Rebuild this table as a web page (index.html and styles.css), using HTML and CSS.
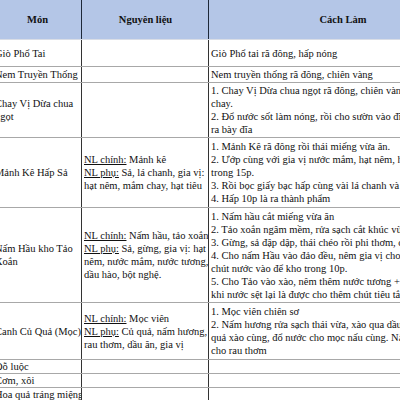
FILE: index.html
```html
<!DOCTYPE html>
<html lang="vi">
<head>
<meta charset="utf-8">
<title>Thực đơn</title>
<link rel="stylesheet" href="styles.css">
</head>
<body>
<div class="sheet">
<table class="menu">
  <colgroup>
    <col class="c1"><col class="c2"><col class="c3">
  </colgroup>
  <thead>
    <tr class="head">
      <th>Món</th>
      <th>Nguyên liệu</th>
      <th>Cách Làm</th>
    </tr>
  </thead>
  <tbody>
    <tr class="r1">
      <td>Giò Phổ Tai</td>
      <td></td>
      <td>Giò Phổ tai rã đông, hấp nóng</td>
    </tr>
    <tr class="r2">
      <td>Nem Truyền Thống</td>
      <td></td>
      <td>Nem truyền thống rã đông, chiên vàng</td>
    </tr>
    <tr class="r3">
      <td>Chay Vị Dừa chua<br>ngọt</td>
      <td></td>
      <td>1. Chay Vị Dừa chua ngọt rã đông, chiên vàng<br>chay.<br>2. Đổ nước sốt làm nóng, rồi cho sườn vào đĩa<br>ra bày đĩa</td>
    </tr>
    <tr class="r4">
      <td>Mảnh Kê Hấp Sả</td>
      <td><span class="u">NL chính:</span> Mảnh kê<br><span class="u">NL phụ:</span> Sả, lá chanh, gia vị:<br>hạt nêm, mắm chay, hạt tiêu</td>
      <td>1. Mảnh Kê rã đông rồi thái miếng vừa ăn.<br>2. Ướp cùng với gia vị nước mắm, hạt nêm, hạt tiêu<br>trong 15p.<br>3. Rồi bọc giấy bạc hấp cùng vài lá chanh và dập<br>4. Hấp 10p là ra thành phẩm</td>
    </tr>
    <tr class="r5">
      <td>Nấm Hầu kho Tảo<br>Xoắn</td>
      <td><span class="u">NL chính:</span> Nấm hầu, tảo xoắn<br><span class="u">NL phụ:</span> Sả, gừng, gia vị: hạt<br>nêm, nước mắm, nước tương,<br>dầu hào, bột nghệ.</td>
      <td>1. Nấm hầu cắt miếng vừa ăn<br>2. Tảo xoắn ngâm mềm, rửa sạch cắt khúc vừa ăn<br>3. Gừng, sả đập dập, thái chéo rồi phi thơm, đổ<br>4. Cho nấm Hầu vào đảo đều, nêm gia vị cho vừa,<br>chút nước vào để kho trong 10p.<br>5. Cho Tảo vào xào, nêm thêm nước tương +<br>khi nước sệt lại là được cho thêm chút tiêu tắt</td>
    </tr>
    <tr class="r6">
      <td>Canh Củ Quả (Mọc)</td>
      <td><span class="u">NL chính:</span> Mọc viên<br><span class="u">NL phụ:</span> Củ quả, nấm hương,<br>rau thơm, dầu ăn, gia vị</td>
      <td>1. Mọc viên chiên sơ<br>2. Nấm hương rửa sạch thái vừa, xào qua dầu<br>quả xào cùng, đổ nước cho mọc nấu cùng. Nấu<br>cho rau thơm</td>
    </tr>
    <tr class="r7">
      <td>Đỗ luộc</td><td></td><td></td>
    </tr>
    <tr class="r8">
      <td>Cơm, xôi</td><td></td><td></td>
    </tr>
    <tr class="r9">
      <td>Hoa quả tráng miệng</td><td></td><td></td>
    </tr>
    <tr class="foot">
      <td></td><td></td><td></td>
    </tr>
  </tbody>
</table>
</div>
</body>
</html>
```

FILE: styles.css
```css
html, body {
  margin: 0;
  padding: 0;
  overflow: hidden;
  background: #ffffff;
}

.sheet {
  width: 400px;
  height: 400px;
  overflow: hidden;
}

.menu {
  margin-left: -8px;
  border-collapse: collapse;
  table-layout: fixed;
  width: 484px;
  font-family: "Liberation Serif", "Times New Roman", serif;
  font-size: 10.5px;
  line-height: 13px;
  color: #111;
}

.c1 { width: 89px; }
.c2 { width: 127px; }
.c3 { width: 268px; }

.menu th,
.menu td {
  padding: 0 1px 0 2px;
  white-space: nowrap;
  overflow: hidden;
  vertical-align: middle;
  text-align: left;
  border-top: 1px solid #a8a8a8;
  border-bottom: 1px solid #a8a8a8;
  border-left: 1px solid #333;
  border-right: 1px solid #333;
}

.head th {
  height: 39px;
  background: #b4c6e7;
  text-align: center;
  font-weight: bold;
  border-top: none;
  border-left: 1px solid #1e2838;
  border-right: 1px solid #1e2838;
  border-bottom: 1px solid #d9dde6;
}

.r1 td { height: 26px; }
.r2 td { height: 15px; }
.r3 td { height: 54px; }
.r4 td { height: 69px; }
.r5 td { height: 94px; }
.r6 td { height: 56px; }
.r7 td { height: 12px; }
.r8 td { height: 12px; }
.r9 td { height: 11px; }

.foot td {
  height: 10px;
  background: #e2efda;
  border-top: 1px solid #8fbf74;
  border-left: 1px solid #c6dcb9;
  border-right: 1px solid #c6dcb9;
}

.u {
  text-decoration: underline;
}
```
